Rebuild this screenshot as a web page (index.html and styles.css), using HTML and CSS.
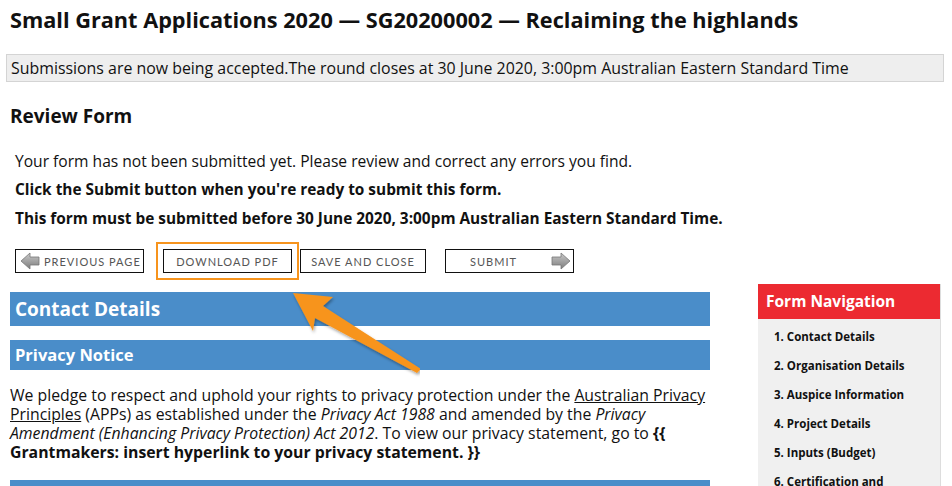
FILE: index.html
```html
<!DOCTYPE html>
<html lang="en">
<head>
  <meta charset="UTF-8">
  <title>Review Form</title>
  <link rel="stylesheet" href="styles.css">
</head>
<body>
  <h1 class="page-title">Small Grant Applications 2020 — SG20200002 — Reclaiming the highlands</h1>
  <div class="notice">Submissions are now being accepted.The round closes at 30 June 2020, 3:00pm Australian Eastern Standard Time</div>

  <h2 class="review-title">Review Form</h2>
  <div class="review-intro">
    <p>Your form has not been submitted yet. Please review and correct any errors you find.</p>
    <p class="strong">Click the Submit button when you're ready to submit this form.</p>
    <p class="strong">This form must be submitted before 30 June 2020, 3:00pm Australian Eastern Standard Time.</p>
  </div>

  <div class="actions">
    <button class="btn btn-prev">
      <svg class="btn-arrow" width="20" height="20" viewBox="0 0 20 20">
        <defs>
          <linearGradient id="gPrev" x1="0" y1="0" x2="0" y2="1">
            <stop offset="0" stop-color="#c9c9c9"/>
            <stop offset="1" stop-color="#7d7d7d"/>
          </linearGradient>
        </defs>
        <path d="M1 10 L10 2 L10 6 L19 6 L19 14 L10 14 L10 18 Z" fill="url(#gPrev)" stroke="#777" stroke-width="0.8"/>
      </svg>
      Previous page
    </button>
    <span class="highlight">
      <button class="btn">Download PDF</button>
    </span>
    <button class="btn btn-save">Save and close</button>
    <button class="btn btn-submit">
      Submit
      <svg class="btn-arrow" width="20" height="20" viewBox="0 0 20 20">
        <defs>
          <linearGradient id="gNext" x1="0" y1="0" x2="0" y2="1">
            <stop offset="0" stop-color="#c9c9c9"/>
            <stop offset="1" stop-color="#7d7d7d"/>
          </linearGradient>
        </defs>
        <path d="M19 10 L10 2 L10 6 L1 6 L1 14 L10 14 L10 18 Z" fill="url(#gNext)" stroke="#777" stroke-width="0.8"/>
      </svg>
    </button>
  </div>

  <div class="layout">
    <main class="form-main">
      <h3 class="section-bar">Contact Details</h3>
      <h4 class="sub-bar">Privacy Notice</h4>
      <p class="privacy">We pledge to respect and uphold your rights to privacy protection under the <a href="#">Australian Privacy Principles</a> (APPs) as established under the <em>Privacy Act 1988</em> and amended by the <em>Privacy Amendment (Enhancing Privacy Protection) Act 2012</em>. To view our privacy statement, go to <strong>{{ Grantmakers: insert hyperlink to your privacy statement. }}</strong></p>
      <div class="sub-bar next-bar"></div>
    </main>

    <aside class="form-nav">
      <div class="nav-head">Form Navigation</div>
      <ol class="nav-list">
        <li>1. Contact Details</li>
        <li>2. Organisation Details</li>
        <li>3. Auspice Information</li>
        <li>4. Project Details</li>
        <li>5. Inputs (Budget)</li>
        <li>6. Certification and</li>
      </ol>
    </aside>
  </div>

  <svg class="callout" width="140" height="100" viewBox="280 280 140 100">
    <defs>
      <filter id="shadow" x="-20%" y="-20%" width="140%" height="140%">
        <feDropShadow dx="1" dy="2" stdDeviation="1.5" flood-color="#000" flood-opacity="0.35"/>
      </filter>
    </defs>
    <polygon points="293,293 333,297 323,306 421,369 417,373 315,318 313,331" fill="#f7941d" filter="url(#shadow)"/>
  </svg>
</body>
</html>
```

FILE: styles.css
```css
body {
  margin: 0;
  padding: 0 8px 0 6px;
  font-family: "Open Sans", Lato, sans-serif;
  color: #111;
  background: #fff;
  position: relative;
  overflow: hidden;
  height: 486px;
}
.page-title {
  margin: 0;
  padding: 6px 0 0 4px;
  font-size: 21.7px;
  font-weight: 700;
  line-height: 28px;
}
.notice {
  margin-top: 20px;
  background: #eee;
  border: 1px solid #d4d4d4;
  padding: 4px 4px;
  font-size: 15.9px;
  line-height: 18px;
}
.review-title {
  margin: 22px 0 0 4px;
  font-size: 19px;
  line-height: 24px;
}
.review-intro {
  margin: 23px 0 0 9px;
  font-size: 15.4px;
}
.review-intro p {
  margin: 0 0 9px;
  line-height: 20px;
}
.review-intro p:first-child {
  font-size: 15.6px;
}
.review-intro .strong {
  font-weight: 700;
}
.actions {
  display: flex;
  align-items: center;
  margin: 20px 0 0 9px;
  height: 24px;
}
.btn {
  display: flex;
  align-items: center;
  justify-content: center;
  gap: 4px;
  height: 24px;
  width: 129px;
  padding: 0;
  border: 1px solid #111;
  background: #fff;
  font-family: Lato, sans-serif;
  font-size: 11px;
  letter-spacing: 1px;
  text-transform: uppercase;
  color: #555;
}
.btn-prev {
  justify-content: flex-start;
  padding-left: 4px;
}
.btn-save {
  width: 126px;
}
.btn-submit {
  margin-left: 19px;
  justify-content: flex-end;
  padding-right: 2px;
  gap: 34px;
}
.btn-arrow {
  flex: none;
}
.highlight {
  display: flex;
  margin: 0 1px 0 12px;
  padding: 5px;
  border: 2px solid #f7941d;
  height: 24px;
}
.layout {
  display: flex;
  margin-top: 11px;
  gap: 48px;
}
.form-main {
  width: 700px;
  padding: 8px 0 0 4px;
}
.section-bar {
  margin: 0;
  background: #4a8dc9;
  color: #fff;
  font-size: 19px;
  line-height: 34px;
  padding: 0 5px;
}
.sub-bar {
  margin: 14px 0 0;
  background: #4a8dc9;
  color: #fff;
  font-size: 16.5px;
  line-height: 30px;
  padding: 0 5px;
}
.privacy {
  margin: 16px 0 0;
  font-size: 15.8px;
  line-height: 19px;
}
.privacy a {
  color: inherit;
}
.next-bar {
  margin-top: 18px;
  height: 20px;
}
.form-nav {
  width: 182px;
  background: #f0f0f0;
  border-right: 1px solid #ddd;
}
.nav-head {
  background: #ec2a31;
  color: #fff;
  font-weight: 700;
  font-size: 15.5px;
  line-height: 35px;
  padding-left: 8px;
}
.nav-list {
  list-style: none;
  margin: 0;
  padding: 10px 0 0 16px;
  font-size: 11.5px;
  font-weight: 700;
}
.nav-list li {
  line-height: 15px;
  margin-bottom: 14px;
}
.callout {
  position: absolute;
  left: 280px;
  top: 280px;
}
```
